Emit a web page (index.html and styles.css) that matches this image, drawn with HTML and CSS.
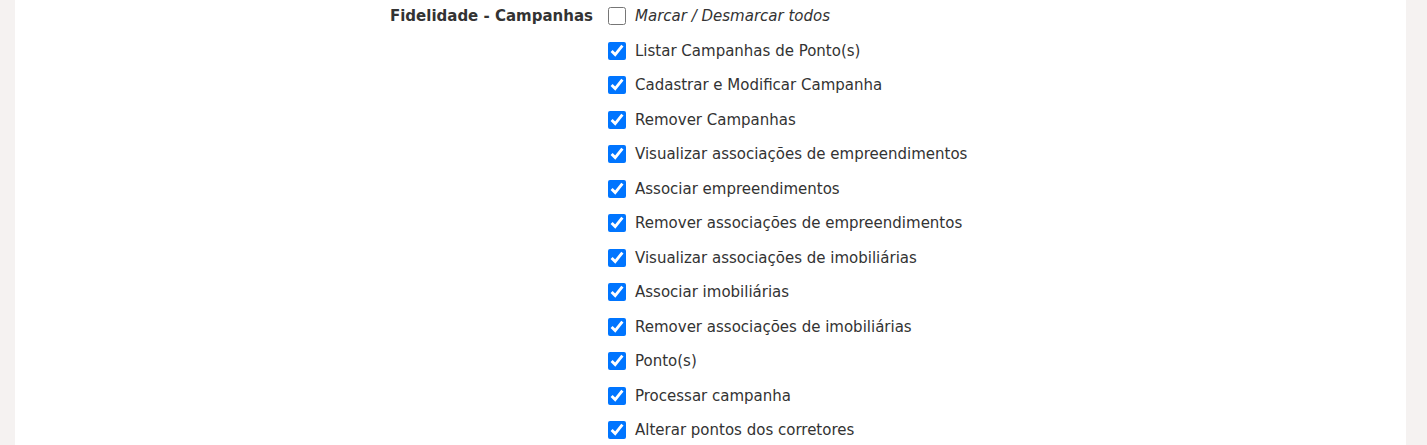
FILE: index.html
```html
<!DOCTYPE html>
<html lang="pt-BR">
<head>
    <meta charset="UTF-8">
    <meta name="viewport" content="width=device-width, initial-scale=1.0">
    <title>Permissões</title>
    <link rel="stylesheet" href="styles.css">
</head>
<body>
    <div class="page">
        <div class="perm-group">
            <div class="perm-label">Fidelidade - Campanhas</div>
            <ul class="perm-list">
                <li class="perm-item toggle-all"><input type="checkbox" class="perm-check"><span>Marcar / Desmarcar todos</span></li>
                <li class="perm-item"><input type="checkbox" class="perm-check" checked><span>Listar Campanhas de Ponto(s)</span></li>
                <li class="perm-item"><input type="checkbox" class="perm-check" checked><span>Cadastrar e Modificar Campanha</span></li>
                <li class="perm-item"><input type="checkbox" class="perm-check" checked><span>Remover Campanhas</span></li>
                <li class="perm-item"><input type="checkbox" class="perm-check" checked><span>Visualizar associações de empreendimentos</span></li>
                <li class="perm-item"><input type="checkbox" class="perm-check" checked><span>Associar empreendimentos</span></li>
                <li class="perm-item"><input type="checkbox" class="perm-check" checked><span>Remover associações de empreendimentos</span></li>
                <li class="perm-item"><input type="checkbox" class="perm-check" checked><span>Visualizar associações de imobiliárias</span></li>
                <li class="perm-item"><input type="checkbox" class="perm-check" checked><span>Associar imobiliárias</span></li>
                <li class="perm-item"><input type="checkbox" class="perm-check" checked><span>Remover associações de imobiliárias</span></li>
                <li class="perm-item"><input type="checkbox" class="perm-check" checked><span>Ponto(s)</span></li>
                <li class="perm-item"><input type="checkbox" class="perm-check" checked><span>Processar campanha</span></li>
                <li class="perm-item"><input type="checkbox" class="perm-check" checked><span>Alterar pontos dos corretores</span></li>
            </ul>
        </div>
    </div>
</body>
</html>
```

FILE: styles.css
```css
body {
    margin: 0;
    background-color: #f5f2f1;
    font-family: "DejaVu Sans", Verdana, sans-serif;
    font-size: 15px;
    color: #333;
    overflow: hidden;
}

.page {
    background: #fff;
    margin: 0 21px 0 15px;
    height: 100vh;
    overflow: hidden;
}

.perm-group {
    display: grid;
    grid-template-columns: 578px 1fr;
    column-gap: 15px;
    margin-top: -1px;
}

.perm-label {
    text-align: right;
    font-weight: bold;
    line-height: 34.5px;
}

.perm-list {
    list-style: none;
    margin: 0;
    padding: 0;
}

.perm-item {
    display: flex;
    align-items: center;
    height: 34.5px;
}

.perm-check {
    width: 18px;
    height: 18px;
    margin: 0 9px 0 0;
    accent-color: #0075ff;
}

.toggle-all span {
    font-style: italic;
}
```
